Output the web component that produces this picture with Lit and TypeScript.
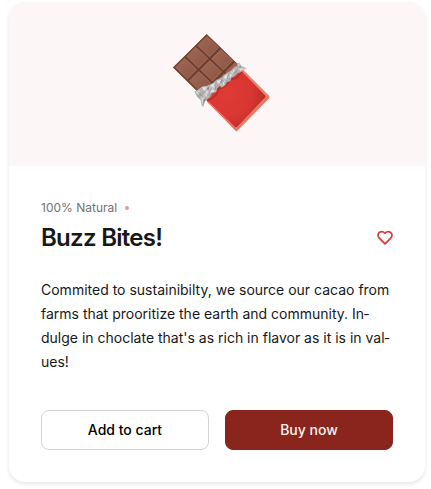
import { LitElement, html, css, svg } from "lit";
import { customElement, property, state } from "lit/decorators.js";

@customElement("chocolate-bar")
export class ChocolateBar extends LitElement {
  static styles = css`
    :host {
      display: block;
    }
    svg {
      display: block;
      width: 110px;
      height: 100px;
    }
  `;

  // Squares run along two diagonals of the bar: u goes down-right, v down-left.
  private square(u: number, v: number) {
    const at = (a: number, b: number) =>
      `${140 + a * 42 - b * 33},${28 + a * 40 + b * 33}`;
    const ring = (inset: number) =>
      [
        at(u + inset, v + inset),
        at(u + 1 - inset, v + inset),
        at(u + 1 - inset, v + 1 - inset),
        at(u + inset, v + 1 - inset),
      ].join(" ");
    return svg`
      <polygon points=${ring(0.03)} fill="#7d4a3a" />
      <polygon points=${ring(0.07)} fill="#a16b58" />
      <polygon points=${ring(0.11)} fill="url(#cocoa)" />
    `;
  }

  render() {
    const cells = [0, 1, 2].flatMap((u) => [0, 1, 2].map((v) => [u, v]));
    return html`
      <svg viewBox="6 24 330 300" role="img" aria-label="Chocolate bar">
        <defs>
          <linearGradient id="cocoa" x1="0" y1="0" x2="1" y2="1">
            <stop offset="0" stop-color="#9d6753" />
            <stop offset="1" stop-color="#8e5645" />
          </linearGradient>
          <radialGradient id="wrap" gradientUnits="userSpaceOnUse" cx="200" cy="205" r="125">
            <stop offset="0" stop-color="#e03b35" />
            <stop offset="0.6" stop-color="#d93632" />
            <stop offset="1" stop-color="#b42c28" />
          </radialGradient>
          <clipPath id="bare">
            <polygon points="140,26 38,127 110,198 160,175 236,120" />
          </clipPath>
        </defs>
        <g clip-path="url(#bare)">
          <polygon points="140,28 266,148 167,247 40,127" fill="#693a2c" />
          ${cells.map(([u, v]) => this.square(u, v))}
          <path d="M140 28 L266 148 M140 28 L40 127" stroke="#80493a" stroke-width="3" fill="none" />
          <path d="M40 127 L112 198" stroke="#6f3e2f" stroke-width="5" />
        </g>
        <path d="M135 222 L225 316 Q229 322 234 316 L328 220 Q331 216 327 212 L248 133 Q200 158 135 222Z" fill="#e8836f" />
        <path d="M137 221 L225 306 Q229 309 232 305 L316 217 Q318 214 315 211 L245 139 Q200 160 137 221Z" fill="url(#wrap)" />
        <path d="M142 230 L229 315" stroke="#e85b4b" stroke-width="3" />
        <path d="M232 311 L323 217" stroke="#d96955" stroke-width="3" />
        <path d="M141 229 Q172 215 176 191 Q198 188 211 163 Q233 163 246 139" fill="none" stroke="#8f1d1c" stroke-width="5" opacity="0.45" />
        <path
          d="M103 200 L116 193 L128 184 L142 182 L158 175 L169 164 L184 159 L194 148 L211 138 L222 127 L232 122 L230 114 L240 115 L244 123 L260 130 L248 135 L243 142 L232 144 L225 153 L214 158 L211 169 L201 171 L196 181 L185 188 L178 181 L171 190 L169 201 L158 204 L150 217 L141 223 L134 231 L130 246 L125 242 L122 225 L112 217Z"
          fill="#b4b4b3"
        />
        <g fill="#e4e4e3">
          <path d="M107 201L119 195L116 209ZM126 187L141 186L133 199ZM151 181L164 174L161 190ZM170 168L183 164L178 178ZM190 156L203 146L199 163ZM213 141L225 131L220 147ZM234 117L239 120L237 131ZM133 205L145 196L140 217ZM125 218L132 219L128 239ZM238 131L254 130L240 138Z" />
          <path d="M147 204L156 193L166 199ZM187 171L197 166L191 182ZM207 151L217 148L210 159Z" />
        </g>
        <g fill="#858585">
          <path d="M119 202L128 206L124 219ZM141 190L149 185L146 200ZM164 181L170 177L167 196ZM182 170L188 160L188 178ZM202 161L209 151L208 167ZM223 143L230 132L231 143ZM239 121L243 125L238 132ZM111 207L117 213L121 223ZM130 224L138 218L130 240ZM150 212L157 202L155 211Z" />
        </g>
        <path
          d="M116 198L130 211L144 201L151 184L160 194L173 173L184 181L191 160L204 165L212 146L226 148L231 128L244 132 M122 207L127 225L139 209L152 201 M134 185L143 203 M199 149L208 160"
          fill="none" stroke="#d8d8d7" stroke-width="2"
        />
        <path
          d="M112 196L122 213L133 201L145 212L154 190 M167 171L175 184L187 165L197 176L207 143 M216 136L224 150L236 122"
          fill="none" stroke="#999" stroke-width="2"
        />
      </svg>
    `;
  }
}

@customElement("app-root")
export class AppRoot extends LitElement {
  @property() tag = "100% Natural";
  @property() name = "Buzz Bites!";
  @state() private liked = false;

  static styles = css`
    :host {
      display: block;
      padding: 2px 6px 7px 9px;
      background: #fff;
      color: #18181b;
      font-family: Inter, "Liberation Sans", sans-serif;
      font-size: 14px;
      line-height: 24px;
    }
    .card {
      border-radius: 16px;
      overflow: hidden;
      background: #fff;
      box-shadow: 0 2px 4px rgba(0, 0, 0, 0.1);
    }
    .media {
      display: flex;
      justify-content: center;
      padding: 31px 0 33px;
      background: #fcf6f6;
    }
    .body {
      padding: 32px;
    }
    .tag {
      display: flex;
      align-items: center;
      gap: 8px;
      margin: 0;
      font-size: 12px;
      line-height: 20px;
      color: #737373;
    }
    .dot {
      width: 4px;
      height: 4px;
      border-radius: 50%;
      background: #eb9a94;
    }
    .heading {
      display: flex;
      align-items: center;
      justify-content: space-between;
    }
    h1 {
      margin: 0;
      font-size: 24px;
      font-weight: 600;
      line-height: 40px;
      letter-spacing: -0.03em;
    }
    .like {
      display: flex;
      padding: 0;
      border: 0;
      background: none;
      color: #d6453b;
      cursor: pointer;
    }
    .like svg {
      width: 16px;
      height: 16px;
    }
    .about {
      margin: 20px 0 36px;
    }
    .actions {
      display: grid;
      grid-template-columns: 1fr 1fr;
      gap: 16px;
    }
    .btn {
      height: 40px;
      padding: 0 16px;
      border: 1px solid #d4d4d4;
      border-radius: 8px;
      background: #fff;
      color: #000;
      font: inherit;
      font-weight: 500;
      cursor: pointer;
    }
    .primary {
      border-color: #89251c;
      background: #89251c;
      color: #fdf3f2;
    }
  `;

  render() {
    return html`
      <article class="card">
        <div class="media"><chocolate-bar></chocolate-bar></div>
        <div class="body">
          <p class="tag">${this.tag}<span class="dot"></span></p>
          <div class="heading">
            <h1>${this.name}</h1>
            <button
              class="like"
              aria-label="Add to favourites"
              aria-pressed=${this.liked}
              @click=${() => (this.liked = !this.liked)}
            >
              <svg viewBox="0 0 16 16" fill=${this.liked ? "currentColor" : "none"} stroke="currentColor" stroke-width="1.8" stroke-linejoin="round">
                <path d="M8 13.8 L2.2 8 C0.6 6.2 0.7 3.8 2.3 2.5 C4 1.2 6.4 1.6 8 3.2 C9.6 1.6 12 1.2 13.7 2.5 C15.3 3.8 15.4 6.2 13.8 8 Z" />
              </svg>
            </button>
          </div>
          <p class="about">
            Commited to sustainibilty, we source our cacao from farms that
            prooritize the earth and community. In&shy;dulge in choclate that's as
            rich in flavor as it is in val&shy;ues!
          </p>
          <div class="actions">
            <button class="btn">Add to cart</button>
            <button class="btn primary">Buy now</button>
          </div>
        </div>
      </article>
    `;
  }
}
